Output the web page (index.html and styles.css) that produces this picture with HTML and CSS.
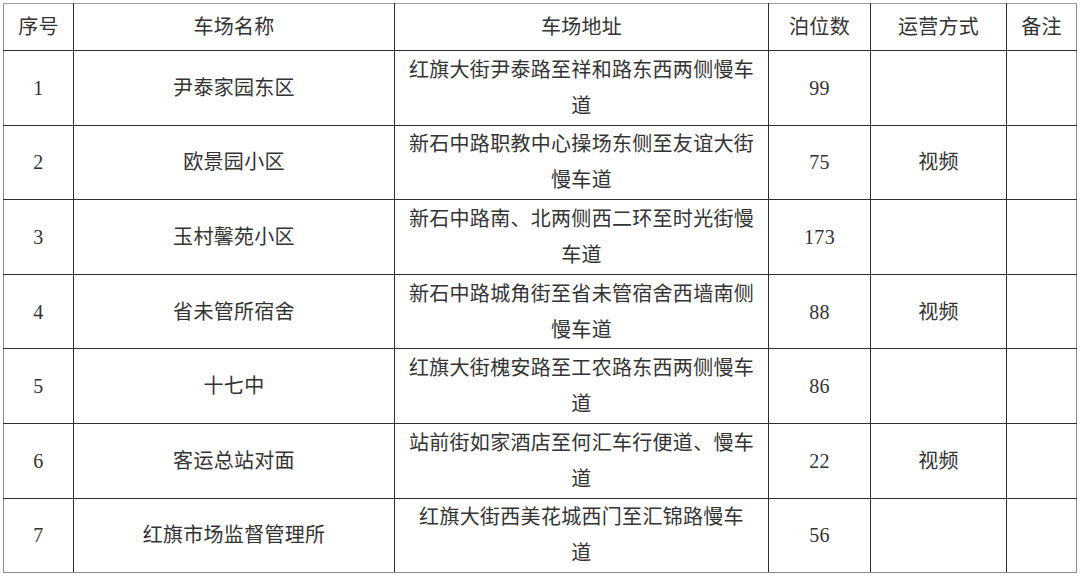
FILE: index.html
```html
<!DOCTYPE html>
<html lang="zh-CN">
<head>
<meta charset="utf-8">
<title>车场列表</title>
<link rel="stylesheet" href="styles.css">
</head>
<body>
<table class="park">
  <colgroup>
    <col class="c-no">
    <col class="c-name">
    <col class="c-addr">
    <col class="c-num">
    <col class="c-mode">
    <col class="c-note">
  </colgroup>
  <thead>
    <tr class="head">
      <th>序号</th><th>车场名称</th><th>车场地址</th><th>泊位数</th><th>运营方式</th><th>备注</th>
    </tr>
  </thead>
  <tbody>
    <tr>
      <td>1</td><td>尹泰家园东区</td><td>红旗大街尹泰路至祥和路东西两侧慢车<br>道</td><td>99</td><td></td><td></td>
    </tr>
    <tr>
      <td>2</td><td>欧景园小区</td><td>新石中路职教中心操场东侧至友谊大街<br>慢车道</td><td>75</td><td>视频</td><td></td>
    </tr>
    <tr>
      <td>3</td><td>玉村馨苑小区</td><td>新石中路南、北两侧西二环至时光街慢<br>车道</td><td>173</td><td></td><td></td>
    </tr>
    <tr>
      <td>4</td><td>省未管所宿舍</td><td>新石中路城角街至省未管宿舍西墙南侧<br>慢车道</td><td>88</td><td>视频</td><td></td>
    </tr>
    <tr>
      <td>5</td><td>十七中</td><td>红旗大街槐安路至工农路东西两侧慢车<br>道</td><td>86</td><td></td><td></td>
    </tr>
    <tr>
      <td>6</td><td>客运总站对面</td><td>站前街如家酒店至何汇车行便道、慢车<br>道</td><td>22</td><td>视频</td><td></td>
    </tr>
    <tr>
      <td>7</td><td>红旗市场监督管理所</td><td>红旗大街西美花城西门至汇锦路慢车<br>道</td><td>56</td><td></td><td></td>
    </tr>
  </tbody>
</table>
</body>
</html>
```

FILE: styles.css
```css
html, body {
  margin: 0;
  padding: 0;
  background: #ffffff;
}

body {
  padding: 3px 0 0 3px;
}

.park {
  border-collapse: collapse;
  table-layout: fixed;
  width: 1073px;
  font-family: "Liberation Serif", "Noto Sans CJK SC", serif;
  font-size: 20px;
  color: #333333;
  border: 1px solid #8c8c8c;
}

.c-no { width: 70px; }
.c-name { width: 321px; }
.c-addr { width: 374px; }
.c-num { width: 102px; }
.c-mode { width: 136px; }
.c-note { width: 70px; }

.park th,
.park td {
  border: 1px solid #2e2e2e;
  padding: 0;
  text-align: center;
  vertical-align: middle;
  line-height: 36px;
  letter-spacing: 0.3px;
  font-weight: normal;
}

.park tr > :first-child { border-left-color: #8c8c8c; }
.park tr > :last-child { border-right-color: #8c8c8c; }
.park thead th { border-top-color: #a0a0a0; }
.park tbody tr:last-child td { border-bottom-color: #8c8c8c; }

.head {
  height: 47px;
}

.park tbody tr {
  height: 74.6px;
}
```
